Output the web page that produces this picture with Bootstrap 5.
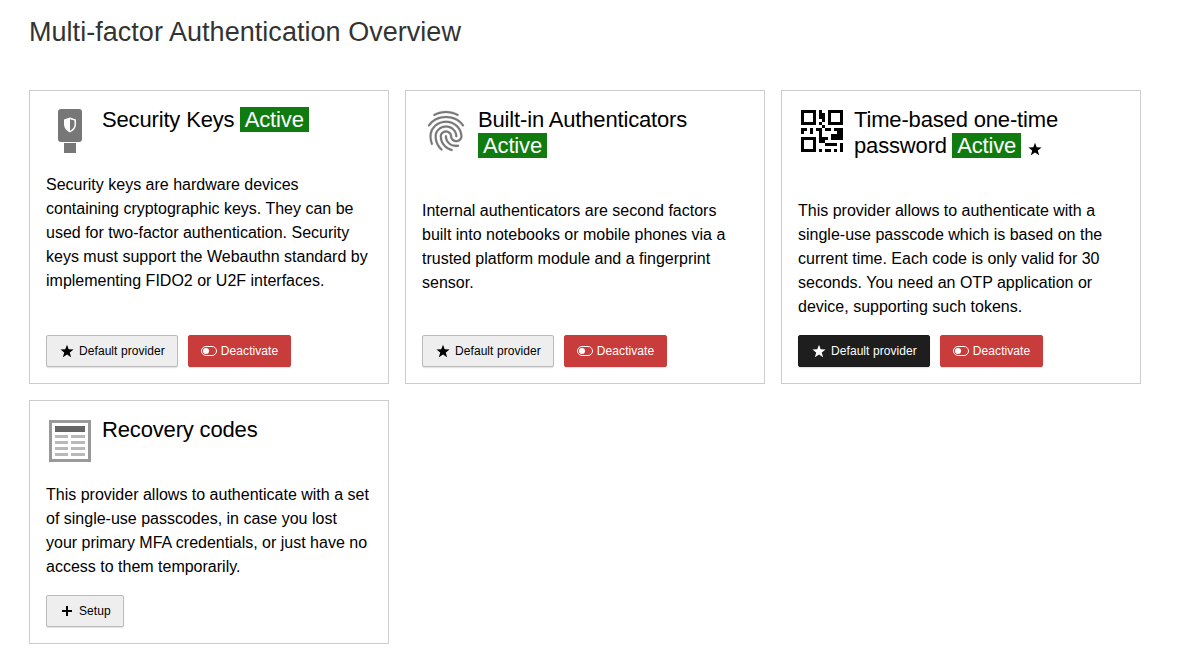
<!DOCTYPE html>
<html lang="en">
<head>
<meta charset="utf-8">
<meta name="viewport" content="width=device-width, initial-scale=1">
<title>Multi-factor Authentication Overview</title>
<link href="https://cdn.jsdelivr.net/npm/bootstrap@5.3.0/dist/css/bootstrap.min.css" rel="stylesheet">
<style>
body{font-family:"Liberation Sans",Arial,sans-serif;color:#000;background:#fff}
.page{padding:16px 29px 0}
.page-title{font-size:27px;line-height:33px;letter-spacing:.035px;color:#333;margin-bottom:41px}
.providers{display:grid;grid-template-columns:repeat(3,360px);gap:16px}
.provider{border:1px solid #ccc;border-radius:0;color:#000;padding:16px}
.provider-head{gap:8px;margin-bottom:40px}
.provider-icon{width:48px;height:48px;flex:none;margin-bottom:-40px}
.provider-title{font-size:22px;line-height:26px;letter-spacing:-.16px;font-weight:400;margin:0}
.state{background:#107c10;color:#fff;padding:0 5px;letter-spacing:-.14px}
.state-inline{margin-left:-.7px}
.provider-text{font-size:16px;line-height:24px;margin:0 0 16px}
.mfa-btn{--bs-btn-font-size:12px;--bs-btn-border-radius:2px;height:32px;padding:0 12px;display:inline-flex;align-items:center;line-height:18px;letter-spacing:.07px;box-shadow:0 1px 1px rgba(0,0,0,.12)}
.mfa-btn svg{width:16px;height:16px;margin-right:4px}
.mfa-light{--bs-btn-color:#000;--bs-btn-bg:#eee;--bs-btn-border-color:#bbb}
.mfa-dark{--bs-btn-color:#fff;--bs-btn-bg:#1e1e1e;--bs-btn-border-color:#1a1a1a}
.mfa-red{--bs-btn-color:#fff;--bs-btn-bg:#c83c3c;--bs-btn-border-color:#c83c3c}
.title-star{vertical-align:-4px}
</style>
</head>
<body>
<svg class="d-none">
<symbol id="star" viewBox="0 0 16 16"><path fill="currentColor" d="M8 1.800l1.700 4.400 4.900.3-3.800 3 1.300 4.800L8 11.600l-4.100 2.700 1.300-4.800-3.800-3 4.900-.3z"/></symbol>
<symbol id="toggle" viewBox="0 0 16 16"><rect x=".5" y="3.500" width="15" height="9" rx="4.500" fill="none" stroke="currentColor"/><circle cx="5" cy="8" r="3" fill="currentColor"/></symbol>
<symbol id="plus" viewBox="0 0 16 16"><path fill="currentColor" d="M7 3h2v4h4v2H9v4H7V9H3V7h4z"/></symbol>
</svg>
<main class="page">
<h1 class="page-title fw-normal">Multi-factor Authentication Overview</h1>
<div class="providers">
<section class="card provider">
<div class="provider-head d-flex">
<svg class="provider-icon" viewBox="0 0 48 48"><rect x="12" y="2" width="24" height="33" rx="3" fill="#777"/><path fill="#777" d="M18 36h12v10H18z"/><path fill="#fff" d="M24 10.500l6 2v5c0 3.500-2.500 6.200-6 8-3.500-1.800-6-4.500-6-8v-5z"/><path fill="#777" d="M24 12.200v11.500c-2.800-1.600-4.500-3.600-4.500-6.200v-3.900z" transform="translate(48 0) scale(-1 1)"/></svg>
<h2 class="provider-title">Security Keys <span class="state state-inline">Active</span></h2></div>
<p class="provider-text">Security keys are hardware devices<br>containing cryptographic keys. They can be<br>used for two-factor authentication. Security<br>keys must support the Webauthn standard by<br>implementing FIDO2 or U2F interfaces.</p>
<div class="d-flex mt-auto" style="gap:10px"><button class="btn mfa-btn mfa-light"><svg><use href="#star"/></svg>Default provider</button><button class="btn mfa-btn mfa-red"><svg><use href="#toggle"/></svg>Deactivate</button></div>
</section>
<section class="card provider">
<div class="provider-head d-flex">
<svg class="provider-icon" viewBox="0 0 24 24"><path fill="#777" stroke="#777" stroke-width=".12" d="M17.810 4.470c-.08 0-.16-.02-.23-.06C15.660 3.420 14 3 12.010 3c-1.980 0-3.860.47-5.570 1.410-.24.13-.54.04-.68-.2-.13-.24-.04-.55.2-.68C7.820 2.520 9.860 2 12.010 2c2.130 0 3.990.47 6.030 1.520.25.13.34.43.21.67-.09.18-.26.28-.44.28zM3.500 9.720c-.1 0-.2-.03-.29-.09-.23-.16-.28-.47-.12-.7.99-1.400 2.250-2.500 3.750-3.270C9.980 4.040 14 4.030 17.150 5.650c1.500.77 2.760 1.860 3.750 3.250.16.22.11.54-.12.7-.23.16-.54.11-.7-.12-.9-1.260-2.040-2.250-3.390-2.940-2.870-1.470-6.540-1.470-9.400.01-1.360.7-2.500 1.700-3.400 2.960-.08.14-.23.21-.39.21zm6.250 12.070c-.13 0-.26-.05-.35-.15-.87-.87-1.340-1.430-2.010-2.640-.69-1.230-1.050-2.730-1.050-4.340 0-2.970 2.540-5.390 5.660-5.390s5.660 2.420 5.660 5.390c0 .28-.22.5-.5.5s-.5-.22-.5-.5c0-2.420-2.090-4.390-4.660-4.390-2.570 0-4.660 1.970-4.660 4.390 0 1.440.32 2.770.93 3.850.64 1.150 1.080 1.640 1.850 2.420.19.2.19.51 0 .71-.11.1-.24.15-.37.15zm7.170-1.850c-1.190 0-2.240-.3-3.100-.89-1.490-1.010-2.380-2.650-2.380-4.390 0-.28.22-.5.5-.5s.5.22.5.5c0 1.410.72 2.740 1.940 3.560.71.48 1.540.71 2.540.71.24 0 .64-.03 1.040-.1.27-.05.53.13.58.41.05.27-.13.53-.41.58-.57.11-1.070.12-1.210.12zM14.910 22c-.04 0-.09-.01-.13-.02-1.590-.44-2.630-1.030-3.720-2.100-1.400-1.390-2.170-3.240-2.170-5.220 0-1.620 1.380-2.940 3.080-2.940 1.700 0 3.080 1.320 3.080 2.940 0 1.070.93 1.940 2.080 1.940s2.080-.87 2.080-1.940c0-3.770-3.250-6.830-7.250-6.830-2.840 0-5.440 1.580-6.610 4.030-.39.81-.59 1.760-.59 2.800 0 .78.07 2.010.67 3.610.1.26-.03.55-.29.64-.26.1-.55-.04-.64-.29-.49-1.310-.73-2.610-.73-3.960 0-1.200.23-2.290.68-3.240 1.330-2.790 4.280-4.600 7.510-4.600 4.550 0 8.250 3.510 8.250 7.830 0 1.620-1.380 2.940-3.080 2.940s-3.080-1.320-3.080-2.940c0-1.070-.93-1.940-2.080-1.940s-2.080.87-2.080 1.940c0 1.710.66 3.310 1.870 4.510.95.94 1.860 1.460 3.270 1.850.27.07.42.35.35.61-.05.23-.26.38-.47.38z"/></svg>
<h2 class="provider-title">Built-in Authenticators<br><span class="state">Active</span></h2></div>
<p class="provider-text">Internal authenticators are second factors<br>built into notebooks or mobile phones via a<br>trusted platform module and a fingerprint<br>sensor.</p>
<div class="d-flex mt-auto" style="gap:10px"><button class="btn mfa-btn mfa-light"><svg><use href="#star"/></svg>Default provider</button><button class="btn mfa-btn mfa-red"><svg><use href="#toggle"/></svg>Deactivate</button></div>
</section>
<section class="card provider">
<div class="provider-head d-flex">
<svg class="provider-icon" viewBox="0 0 48 48" shape-rendering="crispEdges"><path fill="none" stroke="#000" stroke-width="3" d="M4.500 4.500h12v12h-12zM31.500 4.500h12v12h-12zM4.500 31.500h12v12h-12z"/><path d="M21 3h3v3h3v6h-6zM24 12h3v3h-3zM21 15h3v3h-3zM3 21h6v3H6v3H3zM12 21h3v6h-3zM18 21h6v-3h3v3h-3v6h-3v-3h-3zM27 21h6v3h-6zM36 21h3v3h-3zM39 21h6v12h-12v-6h6zM21 27h3v3h6v3h-3v3h-6zM30 36h9v3h-9zM27 36h3v3h-3zM42 36h3v9h-3zM21 42h3v3h-3zM27 42h6v3h-6zM36 42h3v3h-3z"/></svg>
<h2 class="provider-title">Time-based one-time<br>password <span class="state state-inline">Active</span> <svg class="title-star" width="16" height="16"><use href="#star"/></svg></h2></div>
<p class="provider-text">This provider allows to authenticate with a<br>single-use passcode which is based on the<br>current time. Each code is only valid for 30<br>seconds. You need an OTP application or<br>device, supporting such tokens.</p>
<div class="d-flex mt-auto" style="gap:10px"><button class="btn mfa-btn mfa-dark"><svg><use href="#star"/></svg>Default provider</button><button class="btn mfa-btn mfa-red"><svg><use href="#toggle"/></svg>Deactivate</button></div>
</section>
<section class="card provider">
<div class="provider-head d-flex">
<svg class="provider-icon" viewBox="0 0 48 48"><path fill="#fff" stroke="#999" stroke-width="3" d="M4.500 4.500h39v39h-39z"/><path fill="#666" d="M9 9h30v6H9z"/><path stroke="#b9b9b9" stroke-width="3" d="M9 19.500h13m3 0h14M9 25.500h13m3 0h14M9 31.500h13m3 0h14M9 37.500h13m3 0h14"/></svg>
<h2 class="provider-title">Recovery codes</h2></div>
<p class="provider-text">This provider allows to authenticate with a set<br>of single-use passcodes, in case you lost<br>your primary MFA credentials, or just have no<br>access to them temporarily.</p>
<div class="d-flex mt-auto"><button class="btn mfa-btn mfa-light"><svg><use href="#plus"/></svg>Setup</button></div>
</section>
</div>
</main>
<script src="https://cdn.jsdelivr.net/npm/bootstrap@5.3.0/dist/js/bootstrap.bundle.min.js"></script>
</body>
</html>
